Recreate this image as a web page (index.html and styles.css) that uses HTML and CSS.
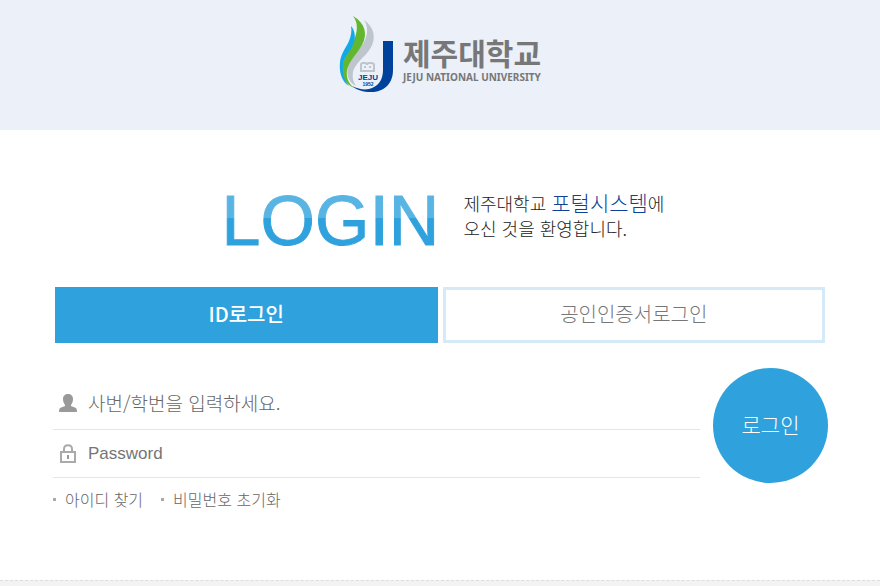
FILE: index.html
```html
<!DOCTYPE html>
<html lang="ko">
<head>
<meta charset="utf-8">
<meta name="viewport" content="width=device-width, initial-scale=1">
<title>제주대학교 포털시스템</title>
<link rel="stylesheet" href="styles.css">
</head>
<body>
<header class="site-header">
  <a class="brand" href="#">
    <svg class="brand-mark" viewBox="0 0 56 80" aria-hidden="true">
      <path fill="#bfc5cc" d="M25 6C35 13 38 24 31 35C25 44 16 49 14 58C13 63 14 68 17 72C9 68 7 60 9 52C12 42 22 35 26 26C29 19 29 12 25 6Z"/>
      <path fill="#62b72f" d="M14 2C26 9 29 20 23 31C18 40 10 47 8 56C7 63 9 69 15 74C6 70 2 62 3 53C5 43 12 34 15 26C19 17 19 8 14 2Z"/>
      <path fill="#12a9e8" d="M12 12C17 18 17 26 13 33C9 40 5 44 4 51C3 59 5 66 10 72C2 67 0 57 1 48C2 39 7 34 10 27C12 22 13 17 12 12Z"/>
      <path fill="#00429b" d="M44 27H54V56C54 70 45 78 32 78C24 78 18 76 13 72C19 75 25 76 30 75C39 73 44 66 44 56Z"/>
      <path fill="none" stroke="#bfc5cc" stroke-width="2" d="M22 57V51Q22 49 24 49H26Q28 49 28 51Q28 49 30 49H32Q35 49 35 51V57M21 57H36M25 53H27M30 53H32"/>
      <text class="mark-name" x="29" y="66" text-anchor="middle">JEJU</text>
      <text class="mark-year" x="29" y="72" text-anchor="middle">1952</text>
    </svg>
    <span class="brand-text">
      <span class="brand-ko">제주대학교</span>
      <span class="brand-en">JEJU NATIONAL UNIVERSITY</span>
    </span>
  </a>
</header>

<main class="content">
  <div class="intro">
    <h1 class="login-title">LOGIN</h1>
    <p class="welcome">제주대학교 <span class="welcome-system">포털시스템</span>에<br>오신 것을 환영합니다.</p>
  </div>

  <div class="tabs">
    <button class="tab tab-active" type="button">ID로그인</button>
    <button class="tab" type="button">공인인증서로그인</button>
  </div>

  <form class="login-form">
    <div class="fields">
      <div class="field">
        <label for="user-id" aria-label="사번/학번">
          <svg class="field-icon" viewBox="0 0 18 20" aria-hidden="true"><path fill="#999" d="M9 2C12 2 14 4 14 7C14 10 13 11 12 13V14L17 16Q18 17 18 20H0Q0 17 1 16L6 14V13C5 11 4 10 4 7C4 4 6 2 9 2Z"/></svg>
        </label>
        <input class="field-input" id="user-id" type="text" placeholder="사번/학번을 입력하세요.">
      </div>
      <div class="field">
        <label for="user-password" aria-label="Password">
          <svg class="field-icon" viewBox="0 0 18 20" aria-hidden="true"><g fill="none" stroke="#aaa" stroke-width="2"><rect x="2" y="8" width="14" height="10"/><path d="M5 8V5C5 0 13 0 13 5V8"/></g><path fill="#999" d="M8 11H10V15H8Z"/></svg>
        </label>
        <input class="field-input field-password" id="user-password" type="password" placeholder="Password">
      </div>
    </div>
    <button class="submit" type="submit">로그인</button>
  </form>

  <ul class="help">
    <li><a href="#">아이디 찾기</a></li>
    <li><a href="#">비밀번호 초기화</a></li>
  </ul>
</main>
<footer class="site-footer"></footer>
</body>
</html>
```
FILE: styles.css
```css
* {
  box-sizing: border-box;
}

body {
  margin: 0;
  background: #fff;
  color: #222;
  font-family: "Noto Sans CJK KR", sans-serif;
  font-weight: 300;
}

button,
input {
  font: inherit;
}

a {
  color: inherit;
  text-decoration: none;
}

.site-header {
  display: flex;
  justify-content: center;
  padding: 14px 0 36px;
  background: #ebf0f9;
}

.brand {
  display: flex;
  gap: 8px;
}

.brand-mark {
  width: 56px;
  height: 80px;
}

.mark-name,
.mark-year {
  fill: #00429b;
  font-family: "Liberation Sans", Arial, sans-serif;
  font-weight: 700;
}

.mark-name {
  font-size: 8px;
}

.mark-year {
  font-size: 5px;
}

.brand-text {
  display: flex;
  flex-direction: column;
  padding-top: 18px;
  color: #777;
  font-weight: 700;
}

.brand-ko {
  font-size: 30px;
  line-height: 40px;
}

.brand-en {
  font-family: "Noto Sans", sans-serif;
  font-size: 10px;
  line-height: 10px;
}

.content {
  padding: 55px 52px 68px;
}

.intro {
  display: flex;
  justify-content: center;
  gap: 24px;
  margin-bottom: 30px;
  padding-left: 6px;
}

.login-title {
  margin: 0;
  background: linear-gradient(#58b4e2 46%, #2fa2dd 46%);
  background-clip: text;
  -webkit-background-clip: text;
  -webkit-text-stroke: 1px transparent;
  color: transparent;
  font-family: "Liberation Sans", Arial, sans-serif;
  font-size: 70px;
  font-weight: 400;
  line-height: 72px;
}

.welcome {
  margin: 5px 0 0;
  font-size: 18px;
  line-height: 25px;
}

.welcome-system {
  color: #0d429a;
  font-size: 21px;
}

.tabs {
  display: grid;
  grid-template-columns: 1fr 1fr;
  gap: 5px;
  margin: 0 3px 25px;
}

.tab {
  padding: 9px 10px 11px;
  border: 3px solid #d4eaf7;
  background: #fff;
  color: #777;
  font-size: 20px;
  line-height: 30px;
}

.tab-active {
  border-color: #2fa2dd;
  background: #2fa2dd;
  color: #fff;
  font-weight: 500;
}

.login-form {
  display: flex;
  gap: 13px;
}

.fields {
  flex: 1;
  padding: 10px 0 0 1px;
}

.field {
  display: flex;
  align-items: center;
  gap: 9px;
  padding: 10px 0 10px 6px;
  border-bottom: 1px solid #e5e5e5;
}

.field:first-child {
  padding-bottom: 13px;
}

.field-icon {
  display: block;
  width: 18px;
  height: 20px;
}

.field-input {
  flex: 1;
  min-width: 0;
  height: 28px;
  padding: 0 2px;
  border: 0;
  outline: 0;
  background: transparent;
  color: #333;
  font-size: 19px;
}

.field-password {
  height: 27px;
  font-family: "Liberation Sans", Arial, sans-serif;
  font-size: 17px;
  font-weight: 400;
}

.field-input::placeholder {
  color: #666;
}

.field-password::placeholder {
  color: #757575;
}

.submit {
  width: 115px;
  height: 115px;
  padding: 0 0 4px;
  border: 0;
  border-radius: 50%;
  background: #2fa2dd;
  color: #fff;
  font-size: 21px;
}

.help {
  display: flex;
  gap: 18px;
  margin: 4px 0 0;
  padding: 0 0 1px 1px;
  color: #666;
  font-size: 16px;
  line-height: 24px;
  list-style: none;
}

.help li {
  display: flex;
  align-items: center;
  gap: 9px;
}

.help li::before {
  width: 3px;
  height: 3px;
  background: #aaa;
  content: "";
}

.site-footer {
  min-height: 6px;
  border-top: 1px dashed #ddd;
  background: #f3f3f3;
}
```
